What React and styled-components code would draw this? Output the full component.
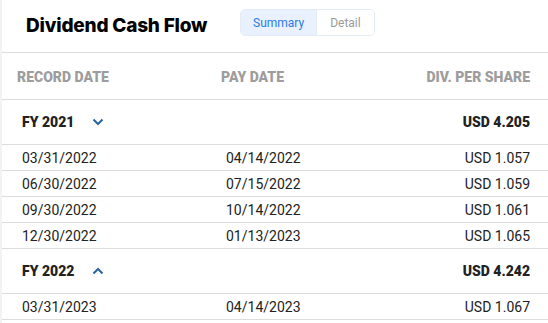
import React from 'react';
import styled, { createGlobalStyle } from 'styled-components';

const Global = createGlobalStyle`
  body {
    margin: 0;
    background: #fff;
    font-family: Roboto, "Liberation Sans", sans-serif;
  }
`;

const Page = styled.div`
  width: 548px;
  height: 323px;
  overflow: hidden;
  border-left: 2px solid #f2f2f7;
  box-sizing: border-box;
`;

const TitleBar = styled.div`
  height: 53px;
  display: flex;
  align-items: center;
  padding-left: 24px;
  border-bottom: 1px solid #dcdcdc;
  box-sizing: border-box;
`;

const Title = styled.h1`
  margin: 0 0 1px 0;
  font-family: Inter, Roboto, sans-serif;
  font-size: 19px;
  font-weight: 800;
  letter-spacing: -0.2px;
  color: #000;
  width: 214px;
`;

const Toggle = styled.div`
  display: flex;
  border: 1px solid #e3ebf7;
  border-radius: 5px;
  overflow: hidden;
  margin-bottom: 7px;
`;

const ToggleBtn = styled.div`
  height: 25px;
  padding: 0 ${(p) => (p.$active ? '12px' : '13px')};
  display: flex;
  align-items: center;
  font-size: 12px;
  color: ${(p) => (p.$active ? '#2c7be5' : '#9a9a9a')};
  background: ${(p) => (p.$active ? '#e8f1fd' : '#fff')};
  border-left: ${(p) => (p.$active ? 'none' : '1px solid #e3ebf7')};
`;

const Grid = styled.div`
  display: grid;
  grid-template-columns: 204px 1fr 200px;
  align-items: center;
  border-bottom: 1px solid #dcdcdc;
  box-sizing: border-box;
  height: ${(p) => p.$h}px;
  padding: 0 18px 0 ${(p) => p.$pl || 20}px;
`;

const HeadCell = styled.div`
  font-size: 14px;
  font-weight: 900;
  color: #9d9d9d;
  text-align: ${(p) => (p.$right ? 'right' : 'left')};
  padding-top: 2px;
`;

const Cell = styled.div`
  font-size: 14px;
  color: #222;
  font-weight: ${(p) => (p.$bold ? 900 : 400)};
  text-align: ${(p) => (p.$right ? 'right' : 'left')};
  display: flex;
  align-items: center;
  justify-content: ${(p) => (p.$right ? 'flex-end' : 'flex-start')};
`;

const Chevron = styled.svg`
  margin-left: 18px;
  width: 12px;
  height: 8px;
`;

const data = [
  {
    year: 'FY 2021',
    total: 'USD 4.205',
    open: true,
    rows: [
      ['03/31/2022', '04/14/2022', 'USD 1.057'],
      ['06/30/2022', '07/15/2022', 'USD 1.059'],
      ['09/30/2022', '10/14/2022', 'USD 1.061'],
      ['12/30/2022', '01/13/2023', 'USD 1.065'],
    ],
  },
  {
    year: 'FY 2022',
    total: 'USD 4.242',
    open: false,
    rows: [['03/31/2023', '04/14/2023', 'USD 1.067']],
  },
];

const Arrow = ({ up }) => (
  <Chevron viewBox="0 0 12 8">
    <path
      d={up ? 'M1.5 6.5 L6 2 L10.5 6.5' : 'M1.5 1.5 L6 6 L10.5 1.5'}
      fill="none"
      stroke="#2a64a0"
      strokeWidth="2"
    />
  </Chevron>
);

export default function App() {
  return (
    <>
      <Global />
      <Page>
        <TitleBar>
          <Title>Dividend Cash Flow</Title>
          <Toggle>
            <ToggleBtn $active>Summary</ToggleBtn>
            <ToggleBtn>Detail</ToggleBtn>
          </Toggle>
        </TitleBar>
        <Grid $h={47} $pl={15}>
          <HeadCell>RECORD DATE</HeadCell>
          <HeadCell>PAY DATE</HeadCell>
          <HeadCell $right>DIV. PER SHARE</HeadCell>
        </Grid>
        {data.map((g) => (
          <React.Fragment key={g.year}>
            <Grid $h={45}>
              <Cell $bold>
                {g.year}
                <Arrow up={!g.open} />
              </Cell>
              <Cell />
              <Cell $bold $right>{g.total}</Cell>
            </Grid>
            {g.rows.map((r) => (
              <Grid $h={26} key={r[0]}>
                <Cell>{r[0]}</Cell>
                <Cell>{r[1]}</Cell>
                <Cell $right>{r[2]}</Cell>
              </Grid>
            ))}
          </React.Fragment>
        ))}
      </Page>
    </>
  );
}
